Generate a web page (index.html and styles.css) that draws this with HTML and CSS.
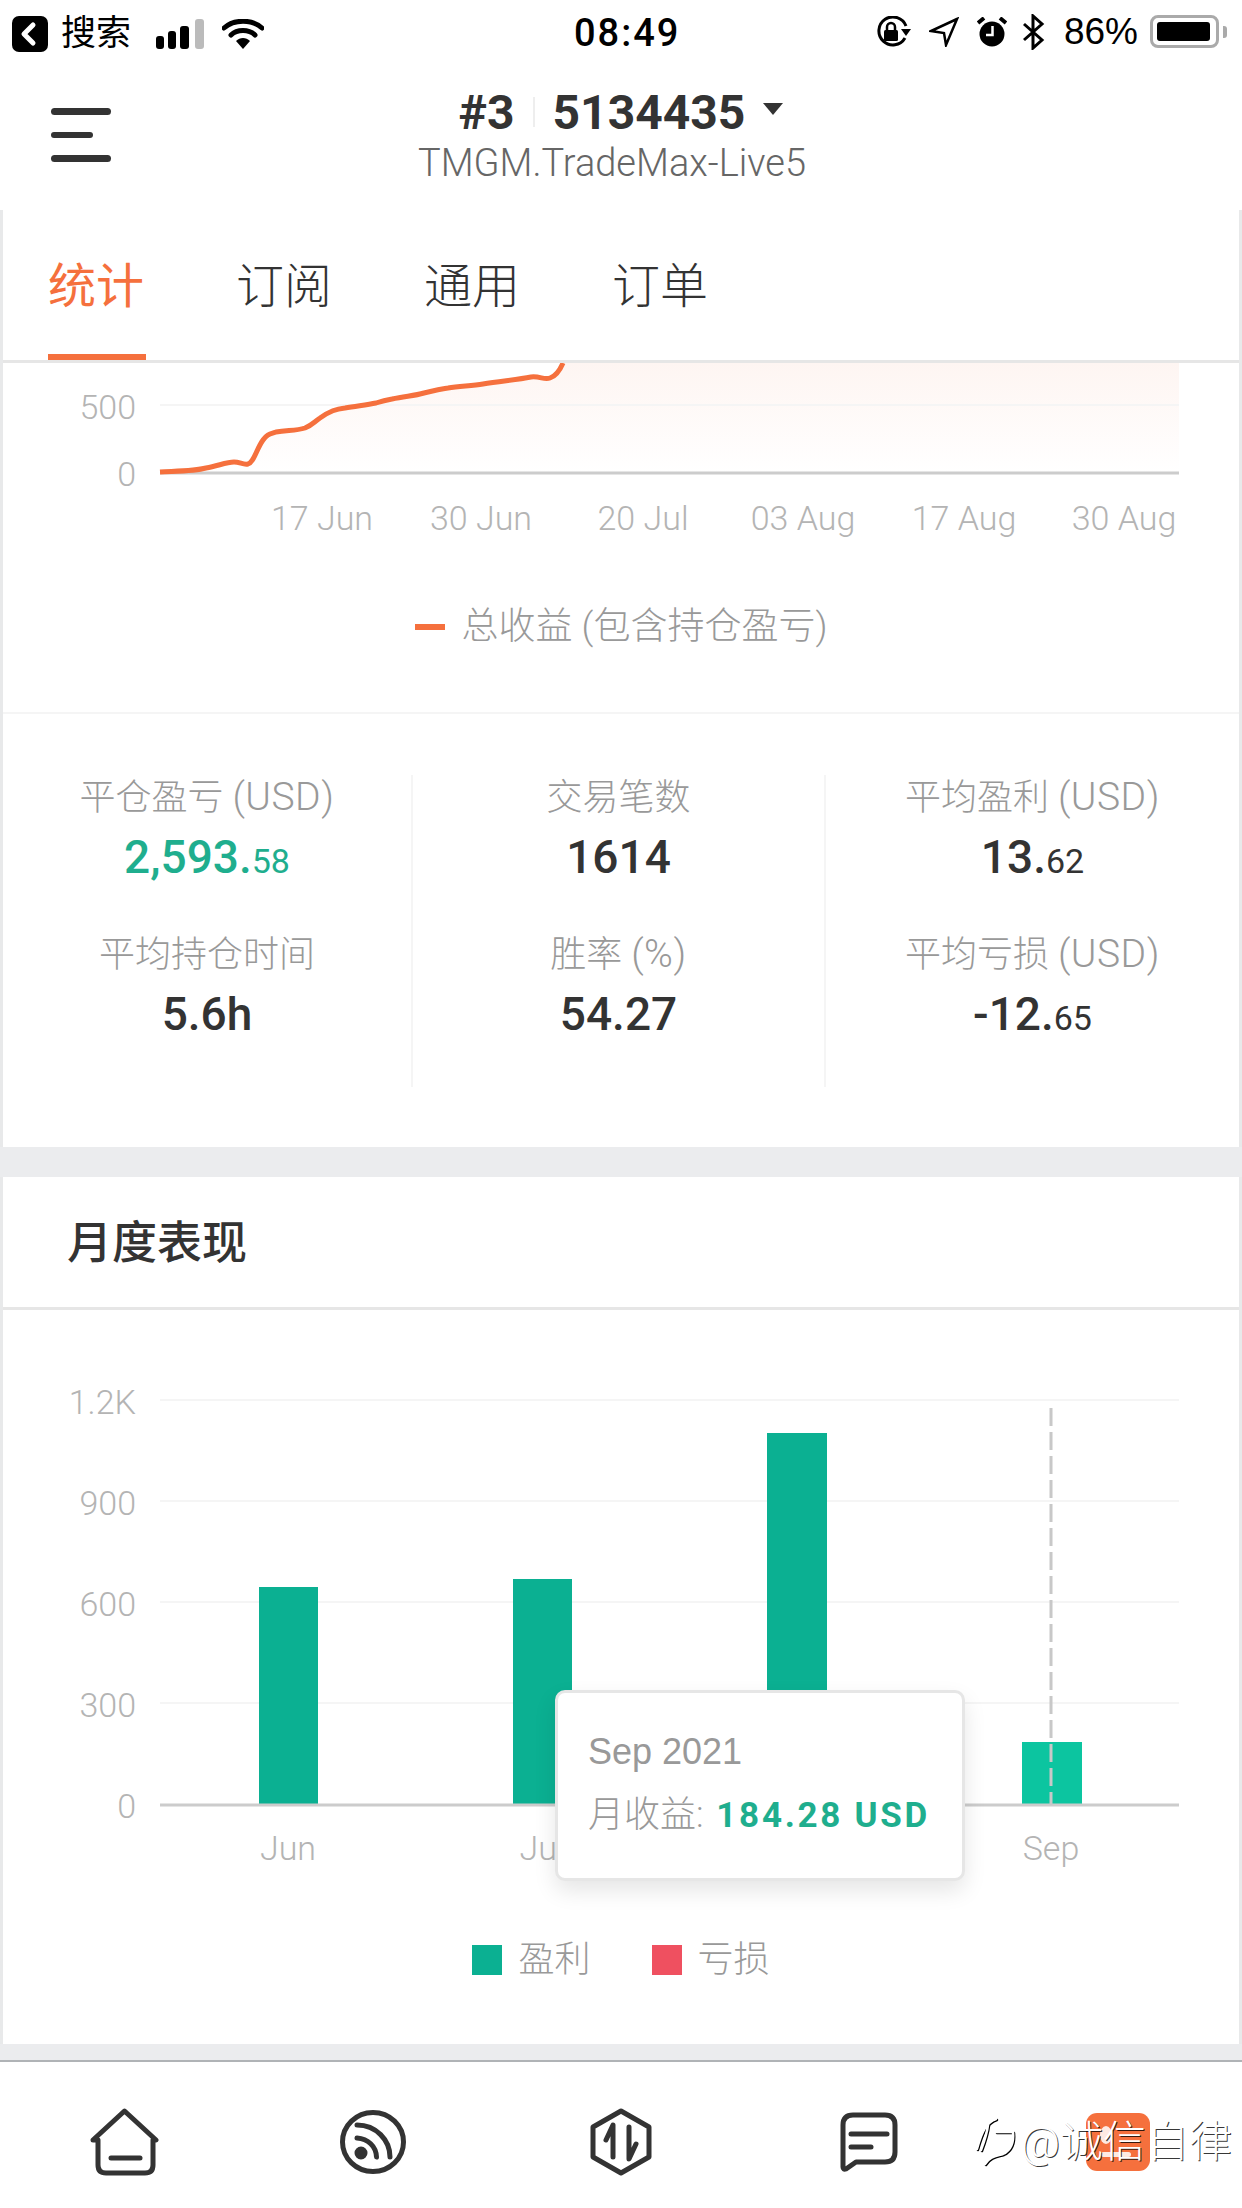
FILE: index.html
```html
<!DOCTYPE html>
<html lang="zh-CN">
<head>
  <meta charset="UTF-8" />
  <meta name="viewport" content="width=device-width, initial-scale=1.0"/>
  <title>统计</title>
  <link rel="stylesheet" href="styles.css">
</head>
<body>
  <div class="status">
    <div class="status-left">
      <span class="back-box">
        <svg width="36" height="36" viewBox="0 0 36 36"><path d="M21 9 L12 18 L21 27" fill="none" stroke="#fff" stroke-width="5" stroke-linecap="round" stroke-linejoin="round"/></svg>
      </span>
      <span class="back-text">搜索</span>
      <svg class="signal" width="48" height="30" viewBox="0 0 48 30">
        <rect x="0" y="17" width="8" height="13" rx="3" fill="#000"/>
        <rect x="12" y="12" width="8" height="18" rx="3" fill="#000"/>
        <rect x="24" y="7" width="9" height="23" rx="3" fill="#000"/>
        <rect x="39" y="0" width="9" height="30" rx="3" fill="#bbb"/>
      </svg>
      <svg class="wifi" width="42" height="30" viewBox="0 0 42 30">
        <path d="M2 9 C12 0 30 0 40 9" fill="none" stroke="#000" stroke-width="5" stroke-linecap="round"/>
        <path d="M9 16 C15 10 27 10 33 16" fill="none" stroke="#000" stroke-width="5" stroke-linecap="round"/>
        <path d="M14 22 C18 18 24 18 28 22 L21 30 Z" fill="#000"/>
      </svg>
    </div>
    <div class="clock">08:49</div>
    <div class="status-right">
      <svg width="36" height="32" viewBox="0 0 36 32">
        <path d="M31 10 A14 14 0 1 0 30 22" fill="none" stroke="#000" stroke-width="3"/>
        <path d="M26 13 H36 L31 20 Z" fill="#000"/>
        <rect x="9" y="14" width="14" height="11" rx="1.5" fill="#000"/>
        <path d="M12 14 V11 A4 4 0 0 1 20 11 V14" fill="none" stroke="#000" stroke-width="2.5"/>
      </svg>
      <svg width="30" height="30" viewBox="0 0 30 30"><path d="M28 2 L2 14 L15 16 L17 28 Z" fill="none" stroke="#000" stroke-width="2.5" stroke-linejoin="miter"/></svg>
      <svg width="30" height="30" viewBox="0 0 30 30">
        <circle cx="15" cy="17" r="12.5" fill="#000"/>
        <path d="M1 6 L7 1 M29 6 L23 1" stroke="#000" stroke-width="4"/>
        <path d="M15.5 9 V18 H9" fill="none" stroke="#fff" stroke-width="2.5"/>
      </svg>
      <svg class="bluetooth" width="24" height="36" viewBox="0 0 24 36"><path d="M2 10 L20 26 L11 34 V2 L20 10 L2 26" fill="none" stroke="#000" stroke-width="3"/></svg>
      <span class="battery-pct">86%</span>
      <span class="battery"><span class="battery-fill"></span></span>
      <span class="battery-cap"></span>
    </div>
  </div>

  <header class="topbar">
    <div class="menu">
      <span class="menu-bar"></span>
      <span class="menu-bar short"></span>
      <span class="menu-bar"></span>
    </div>
    <div class="account">
      <div class="account-title">
        <span>#3</span><span class="sep"></span><span>5134435</span><span class="caret"></span>
      </div>
      <div class="account-server">TMGM.TradeMax-Live5</div>
    </div>
  </header>

  <main class="page">
    <nav class="tabs">
      <a class="tab active">统计</a>
      <a class="tab">订阅</a>
      <a class="tab">通用</a>
      <a class="tab">订单</a>
    </nav>

    <section class="total-chart">
      <svg class="chart" width="1236" height="217" viewBox="3 363 1236 217">
        <defs>
          <linearGradient id="areaFill" x1="0" y1="0" x2="0" y2="1">
            <stop offset="0" stop-color="#fef5f2"/>
            <stop offset="1" stop-color="#ffffff"/>
          </linearGradient>
        </defs>
        <path d="M160 472 C180 471 195 471 206 468 C218 466 226 462 234 462 C240 462 243 465 248 464 C254 462 256 450 263 440 C267 434 270 434 276 432 C288 430 296 431 305 428 C312 425 314 422 320 418 C330 411 336 409 345 408 C356 406 366 405 376 403 C382 401 386 400 392 399 C405 396 414 396 424 393 C432 391 440 389 448 388 C460 386 472 386 483 384 C500 381 516 380 531 377 C540 376 544 380 550 378 C556 376 560 370 563 363 L1179 363 L1179 473 L160 473 Z" fill="url(#areaFill)"/>
        <line class="grid" x1="160" y1="405" x2="1179" y2="405"/>
        <line class="axis" x1="160" y1="473" x2="1179" y2="473"/>
        <path class="curve" d="M160 472 C180 471 195 471 206 468 C218 466 226 462 234 462 C240 462 243 465 248 464 C254 462 256 450 263 440 C267 434 270 434 276 432 C288 430 296 431 305 428 C312 425 314 422 320 418 C330 411 336 409 345 408 C356 406 366 405 376 403 C382 401 386 400 392 399 C405 396 414 396 424 393 C432 391 440 389 448 388 C460 386 472 386 483 384 C500 381 516 380 531 377 C540 376 544 380 550 378 C556 376 560 370 563 363"/>
        <text class="tick" x="136" y="419" text-anchor="end">500</text>
        <text class="tick" x="136" y="486" text-anchor="end">0</text>
        <text class="tick" x="322" y="530" text-anchor="middle">17 Jun</text>
        <text class="tick" x="481" y="530" text-anchor="middle">30 Jun</text>
        <text class="tick" x="643" y="530" text-anchor="middle">20 Jul</text>
        <text class="tick" x="803" y="530" text-anchor="middle">03 Aug</text>
        <text class="tick" x="964" y="530" text-anchor="middle">17 Aug</text>
        <text class="tick" x="1124" y="530" text-anchor="middle">30 Aug</text>
      </svg>
      <div class="legend">
        <span class="legend-dash"></span>
        <span>总收益 (包含持仓盈亏)</span>
      </div>
    </section>

    <section class="stats">
      <div class="stat-col">
        <div class="stat-label">平仓盈亏 <span class="unit">(USD)</span></div>
        <div class="stat-value green">2,593.<small>58</small></div>
        <div class="stat-label">平均持仓时间</div>
        <div class="stat-value">5.6h</div>
      </div>
      <div class="stat-col">
        <div class="stat-label">交易笔数</div>
        <div class="stat-value">1614</div>
        <div class="stat-label">胜率 <span class="unit">(%)</span></div>
        <div class="stat-value">54.27</div>
      </div>
      <div class="stat-col">
        <div class="stat-label">平均盈利 <span class="unit">(USD)</span></div>
        <div class="stat-value">13.<small>62</small></div>
        <div class="stat-label">平均亏损 <span class="unit">(USD)</span></div>
        <div class="stat-value">-12.<small>65</small></div>
      </div>
    </section>

    <div class="band"></div>

    <h2 class="section-title">月度表现</h2>

    <section class="monthly">
      <svg class="chart" width="1236" height="570" viewBox="3 1310 1236 570">
        <line class="grid" x1="160" y1="1400" x2="1179" y2="1400"/>
        <line class="grid" x1="160" y1="1501" x2="1179" y2="1501"/>
        <line class="grid" x1="160" y1="1602" x2="1179" y2="1602"/>
        <line class="grid" x1="160" y1="1703" x2="1179" y2="1703"/>
        <rect class="bar" x="259" y="1587" width="59" height="218"/>
        <rect class="bar" x="513" y="1579" width="59" height="226"/>
        <rect class="bar" x="767" y="1433" width="60" height="372"/>
        <rect class="bar current" x="1022" y="1742" width="60" height="63"/>
        <line class="axis" x1="160" y1="1805" x2="1179" y2="1805"/>
        <line class="pointer" x1="1051" y1="1408" x2="1051" y2="1805"/>
        <text class="tick" x="136" y="1414" text-anchor="end">1.2K</text>
        <text class="tick" x="136" y="1515" text-anchor="end">900</text>
        <text class="tick" x="136" y="1616" text-anchor="end">600</text>
        <text class="tick" x="136" y="1717" text-anchor="end">300</text>
        <text class="tick" x="136" y="1818" text-anchor="end">0</text>
        <text class="tick" x="288" y="1860" text-anchor="middle">Jun</text>
        <text class="tick" x="542" y="1860" text-anchor="middle">Jul</text>
        <text class="tick" x="797" y="1860" text-anchor="middle">Aug</text>
        <text class="tick" x="1051" y="1860" text-anchor="middle">Sep</text>
      </svg>
      <div class="tooltip">
        <div class="tooltip-date">Sep 2021</div>
        <div class="tooltip-row">月收益: <b>184.28 USD</b></div>
      </div>
      <div class="legend monthly-legend">
        <span class="legend-box profit"></span>
        <span>盈利</span>
        <span class="legend-box loss"></span>
        <span>亏损</span>
      </div>
    </section>
  </main>

  <div class="band short"></div>

  <footer class="tabbar">
    <a class="tabbar-item">
      <svg width="69" height="68" viewBox="0 0 69 68" class="nav-icon">
        <path d="M3 32 L34.5 3 L66 32 L63 32 V57 Q63 65 55 65 H16 Q8 65 8 57 V32 Z"/>
        <path d="M21 50 H50"/>
      </svg>
    </a>
    <a class="tabbar-item">
      <svg width="66" height="64" viewBox="0 0 66 64" class="nav-icon">
        <ellipse cx="33" cy="32" rx="30.5" ry="29.5"/>
        <path d="M17 15 C36 15 50 30 50 47"/>
        <path d="M17 28 C28 29 36 36 36.5 47"/>
        <circle class="dot" cx="21" cy="43" r="4"/>
      </svg>
    </a>
    <a class="tabbar-item">
      <svg width="64" height="68" viewBox="0 0 64 68" class="nav-icon">
        <path d="M32 3 L60 19 V49 L32 65 L4 49 V19 Z"/>
        <path d="M24 49 V17 L17 32"/>
        <path d="M40 19 V51 L47 36"/>
      </svg>
    </a>
    <a class="tabbar-item">
      <svg width="58" height="60" viewBox="0 0 58 60" class="nav-icon">
        <path d="M13 3 H45 Q55 3 55 13 V40 Q55 50 45 50 H16 L6 57 Q3 58 3 55 V13 Q3 3 13 3 Z"/>
        <path d="M11 22 H47"/>
        <path d="M11 35 H31"/>
      </svg>
    </a>
    <a class="tabbar-item">
      <svg width="64" height="58" viewBox="0 0 64 58">
        <rect width="64" height="58" rx="11" fill="#f5703d"/>
        <ellipse cx="20" cy="22" rx="6" ry="9" fill="#fff" opacity="0.85"/>
        <rect x="15" y="39" width="30" height="5" rx="2.5" fill="#fff" opacity="0.85"/>
      </svg>
    </a>
    <div class="watermark">
      <svg class="watermark-logo" width="44" height="60" viewBox="0 0 44 60">
        <path d="M23 7 C14 10 9 18 4 37 M12 52 C17 44 24 44 30 42 C38 38 41 30 40 20 M23 20 H38 M15 13 C14 22 11 30 8 38" fill="none" stroke="#fff" stroke-width="2.5" stroke-linecap="round"/>
      </svg>
      <span class="watermark-text">@诚信自律</span>
    </div>
  </footer>
</body>
</html>
```

FILE: styles.css
```css
* {
  box-sizing: border-box;
}

body {
  margin: 0;
  width: 1242px;
  height: 2208px;
  overflow: hidden;
  background: #fff;
  color: #333;
  font-family: Roboto, "Noto Sans CJK SC", sans-serif;
}

/* status bar */
.status {
  height: 60px;
  display: grid;
  grid-template-columns: 562px auto 1fr;
  padding: 0 15px 0 12px;
  align-items: center;
  color: #000;
}

.status-left {
  display: flex;
  align-items: center;
  padding-top: 4px;
}

.back-box {
  width: 36px;
  height: 36px;
  background: #000;
  border-radius: 7px;
  display: block;
}

.back-box svg {
  display: block;
}

.back-text {
  font-size: 35px;
  line-height: 36px;
  margin-left: 13px;
}

.signal {
  margin-left: 25px;
}

.wifi {
  margin-left: 18px;
}

.clock {
  font-size: 38px;
  font-weight: 500;
  letter-spacing: 2px;
  line-height: 60px;
  padding-top: 3px;
}

.status-right {
  display: flex;
  align-items: center;
  justify-content: flex-end;
  gap: 18px;
}

.bluetooth {
  margin-left: -3px;
}

.battery-pct {
  font-family: "Liberation Sans", sans-serif;
  font-size: 37px;
  margin-right: -6px;
}

.battery {
  width: 69px;
  height: 33px;
  border: 3px solid #aaa;
  border-radius: 8px;
  padding: 4px;
  display: block;
}

.battery-fill {
  display: block;
  width: 53px;
  height: 19px;
  background: #000;
  border-radius: 3px;
}

.battery-cap {
  width: 4px;
  height: 12px;
  background: #aaa;
  border-radius: 0 3px 3px 0;
  margin-left: -14px;
}

/* account header */
.topbar {
  height: 150px;
  display: grid;
  grid-template-columns: 1fr auto 1fr;
}

.menu {
  margin: 48px 0 0 51px;
  display: flex;
  flex-direction: column;
  gap: 17px;
}

.menu-bar {
  width: 60px;
  height: 7px;
  background: #333;
  border-radius: 4px;
}

.menu-bar.short {
  width: 42px;
  height: 6px;
}

.account {
  padding-top: 25px;
  text-align: center;
}

.account-title {
  height: 54px;
  display: flex;
  align-items: center;
  justify-content: center;
  font-size: 48px;
  font-weight: 700;
  color: #333;
}

.sep {
  width: 2px;
  height: 30px;
  background: #eee;
  margin: 0 18px;
}

.caret {
  width: 0;
  height: 0;
  border-left: 10px solid transparent;
  border-right: 10px solid transparent;
  border-top: 12px solid #333;
  margin: 0 0 6px 18px;
}

.account-server {
  font-size: 38px;
  line-height: 40px;
  color: #666;
  margin-top: 4px;
  margin-right: 18px;
  font-weight: 300;
}

/* content */
.page {
  height: 1834px;
  border-left: 3px solid #e8e9ea;
  border-right: 3px solid #e8e9ea;
  display: flex;
  flex-direction: column;
}

.tabs {
  height: 153px;
  display: flex;
  gap: 90px;
  padding-left: 45px;
  border-bottom: 3px solid #e6e6e6;
  flex: none;
}

.tab {
  width: 98px;
  height: 150px;
  padding: 54px 2px 0 0;
  font-size: 48px;
  line-height: 46px;
  font-weight: 300;
  text-align: center;
  color: #333;
}

.tab.active {
  color: #f5703d;
  font-weight: 400;
  border-bottom: 6px solid #f5703d;
}

.chart {
  display: block;
}

.chart text {
  font-family: Roboto, sans-serif;
}

.tick {
  font-size: 34px;
  font-weight: 300;
  fill: #b4b4b4;
}

.grid {
  stroke: #f5f5f5;
  stroke-width: 2;
}

.axis {
  stroke: #ccc;
  stroke-width: 3;
}

.curve {
  fill: none;
  stroke: #f5703d;
  stroke-width: 5;
}

.bar {
  fill: #0bb092;
}

.bar.current {
  fill: #0cc5a0;
}

.pointer {
  stroke: #c8c8c8;
  stroke-width: 3;
  stroke-dasharray: 18 6;
}

.total-chart {
  height: 349px;
  flex: none;
}

.legend {
  display: flex;
  align-items: center;
  justify-content: center;
  font-size: 36px;
  line-height: 48px;
  font-weight: 300;
  color: #999;
}

.total-chart .legend {
  margin-top: 23px;
  font-size: 37px;
}

.legend-dash {
  width: 30px;
  height: 6px;
  background: #f5703d;
  margin-right: 17px;
}

.stats {
  height: 435px;
  flex: none;
  border-top: 2px solid #f5f5f5;
  padding-top: 61px;
  display: grid;
  grid-template-columns: 410px 413px 1fr;
}

.stat-col {
  height: 312px;
  text-align: center;
  border-right: 2px solid #f5f5f5;
}

.stat-col:last-child {
  border-right: none;
}

.stat-label {
  height: 46px;
  font-size: 36px;
  line-height: 46px;
  font-weight: 300;
  color: #999;
}

.unit {
  font-size: 39px;
  line-height: 40px;
  letter-spacing: 0.5px;
}

.stat-value {
  height: 56px;
  font-size: 46px;
  line-height: 56px;
  font-weight: 500;
  color: #333;
  margin: 8px 0 47px;
}

.stat-value small {
  font-size: 34px;
  font-weight: 400;
}

.stat-value.green {
  color: #1fae8e;
}

.band {
  height: 30px;
  flex: none;
  background: #ebecee;
  margin: 0 -3px;
}

.band.short {
  height: 18px;
  margin: 0;
  border-bottom: 2px solid #b0b3b6;
}

.section-title {
  margin: 0;
  height: 133px;
  flex: none;
  padding: 41px 0 0 64px;
  font-size: 45px;
  line-height: 52px;
  font-weight: 500;
  color: #333;
  border-bottom: 3px solid #e6e6e6;
}

.monthly {
  position: relative;
  flex: 1;
}

.tooltip {
  position: absolute;
  left: 552px;
  top: 380px;
  width: 410px;
  height: 191px;
  background: #fff;
  border: 3px solid #e6e6e6;
  border-radius: 10px;
  box-shadow: 0 10px 22px rgba(0, 0, 0, 0.1);
  padding: 35px 0 0 30px;
  font-size: 36px;
  color: #999;
}

.tooltip-date {
  font-family: "Liberation Sans", sans-serif;
  line-height: 48px;
}

.tooltip-row {
  margin-top: 15px;
  line-height: 48px;
  font-weight: 300;
  white-space: nowrap;
}

.tooltip-row b {
  font-size: 35px;
  font-weight: 700;
  letter-spacing: 2.7px;
  margin-left: 4px;
  color: #1fae8e;
}

.monthly-legend {
  margin-top: 56px;
}

.legend-box {
  width: 30px;
  height: 30px;
  margin-right: 16px;
}

.legend-box.profit {
  background: #0bb092;
}

.legend-box.loss {
  background: #ef5060;
  margin-left: 61px;
}

/* bottom navigation */
.tabbar {
  position: relative;
  height: 146px;
  display: grid;
  grid-template-columns: repeat(5, 1fr);
}

.tabbar-item {
  display: flex;
  align-items: center;
  justify-content: center;
  padding-top: 14px;
}

.nav-icon {
  fill: none;
  stroke: #333;
  stroke-width: 5;
  stroke-linecap: round;
  stroke-linejoin: round;
}

.nav-icon .dot {
  fill: #333;
}

.watermark {
  position: absolute;
  right: 10px;
  top: 50px;
  display: flex;
  align-items: center;
  color: #fff;
}

.watermark-logo {
  filter: drop-shadow(1px 1px 0 #000);
  margin-right: 4px;
}

.watermark-text {
  font-size: 43px;
  line-height: 60px;
  font-weight: 300;
  text-shadow: 1px 1px 0 rgba(0, 0, 0, 0.8);
}
```
